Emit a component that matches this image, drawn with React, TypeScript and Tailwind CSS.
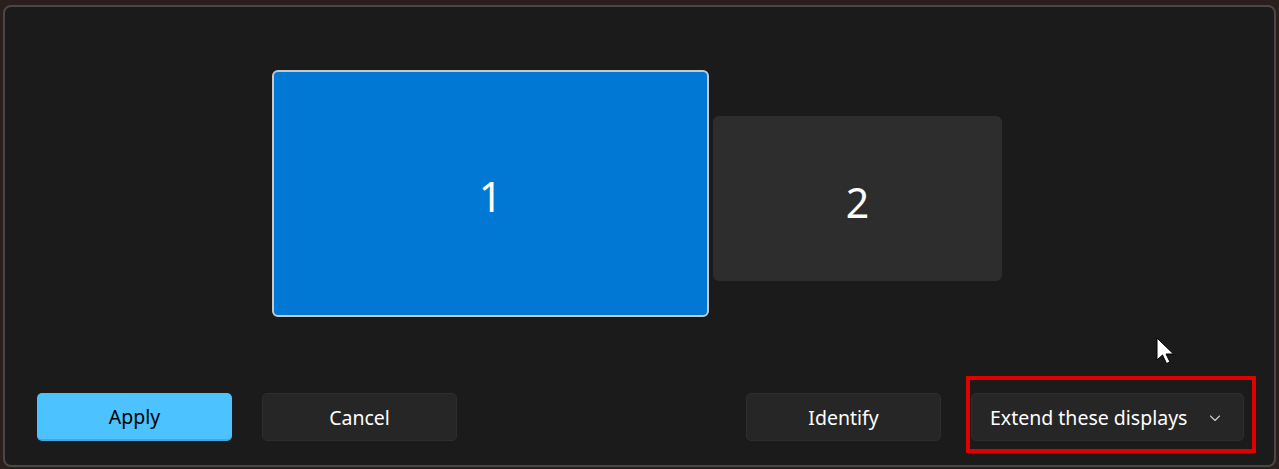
const font = { fontFamily: '"Noto Sans", "Open Sans", sans-serif' };

function Chevron() {
  return (
    <svg width="12" height="12" viewBox="0 0 12 12" className="text-[#cfcfcf]">
      <path d="M1.5 4 L6 8.5 L10.5 4" fill="none" stroke="currentColor" strokeWidth="1.1" strokeLinecap="round" strokeLinejoin="round" />
    </svg>
  );
}

function Cursor() {
  return (
    <svg width="22" height="30" viewBox="0 0 22 30" className="absolute left-[1156px] top-[337px]">
      <path
        d="M1 1 L1 23 L6.5 18 L10.5 26.5 L14 25 L10 17 L17.5 17 Z"
        fill="#ffffff"
        stroke="#000000"
        strokeWidth="1"
        strokeLinejoin="miter"
      />
    </svg>
  );
}

export default function App() {
  return (
    <div className="relative h-[469px] w-[1279px] bg-[#2a1f1c] pl-[3px] pr-[3px] pt-[5px] pb-[2px]" style={font}>
      <div className="flex h-[462px] flex-col rounded-[8px] border-2 border-[#4b4746] bg-[#1b1b1b]">
        <div className="flex items-start pl-[267px] pt-[63px]">
          <div className="flex h-[247px] w-[437px] items-center justify-center rounded-[6px] border-2 border-[#c9c9c9] bg-[#0078d4] pt-[6px]">
            <span className="text-[41px] leading-none text-white">1</span>
          </div>
          <div className="ml-[4px] mt-[46px] flex h-[165px] w-[289px] items-center justify-center rounded-[6px] bg-[#2d2d2d] pt-[8px]">
            <span className="text-[41px] leading-none text-white">2</span>
          </div>
        </div>

        <div className="mt-auto mb-[24px] flex items-center pl-[32px] pr-[30px]">
          <button className="h-[48px] w-[195px] rounded-[5px] border-b-2 border-[#3fa9e0] bg-[#4cc2ff] pt-[2px] text-[19.5px] text-black">
            Apply
          </button>
          <button className="ml-[30px] h-[48px] w-[195px] rounded-[5px] border border-[#2e2e2e] bg-[#262626] pt-[2px] text-[19.5px] text-white">
            Cancel
          </button>
          <button className="ml-auto h-[48px] w-[195px] rounded-[5px] border border-[#2e2e2e] bg-[#262626] pt-[2px] text-[19.5px] text-white">
            Identify
          </button>
          <div className="relative ml-[30px]">
            <button className="flex h-[48px] w-[273px] items-center justify-between rounded-[5px] border border-[#2e2e2e] bg-[#262626] pl-[18px] pr-[22px] pt-[2px] text-[19.5px] text-white">
              <span>Extend these displays</span>
              <Chevron />
            </button>
            <div className="pointer-events-none absolute -left-[5px] -right-[12px] -top-[17px] -bottom-[12px] border-4 border-[#e00000]" />
          </div>
        </div>
      </div>
      <Cursor />
    </div>
  );
}
